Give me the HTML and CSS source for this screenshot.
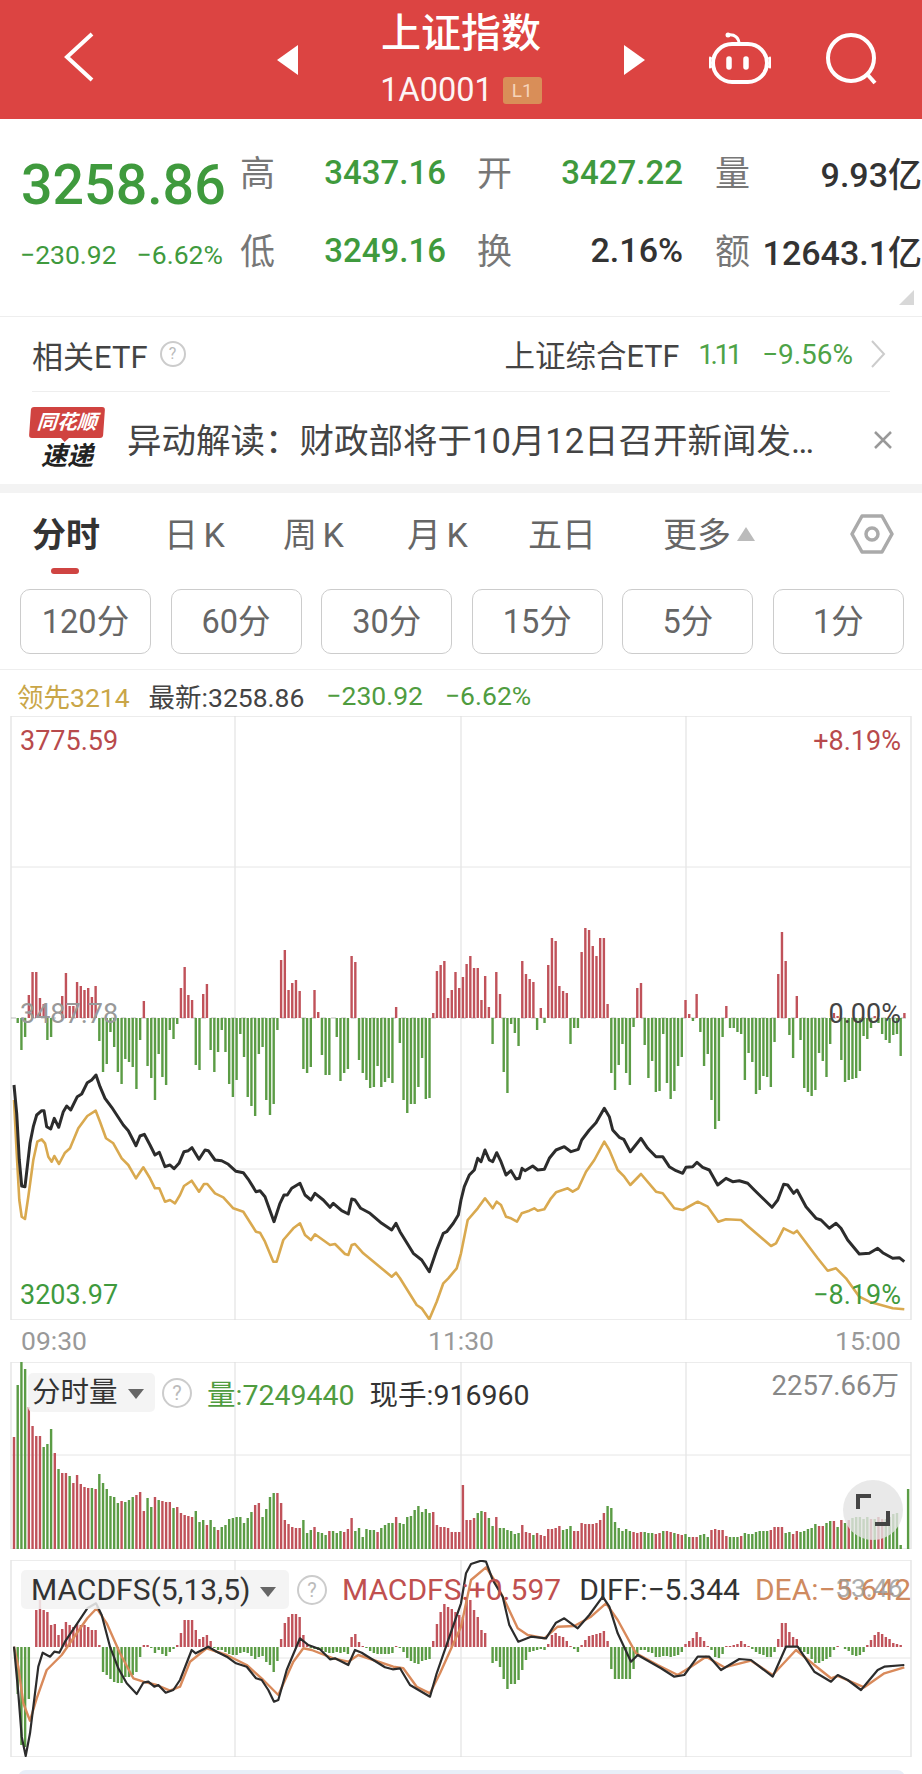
FILE: index.html
```html
<!DOCTYPE html>
<html lang="zh-CN">
<head>
    <meta charset="UTF-8">
    <title>上证指数</title>
    <link rel="stylesheet" href="styles.css">
</head>
<body>
    <header class="topbar">
        <svg class="back" width="32" height="50" viewBox="0 0 32 50"><path d="M29 2 L4 25 L29 48" /></svg>
        <div class="switcher">
            <span class="arrow arrow-left"></span>
            <div class="title">
                <h1>上证指数</h1>
                <div class="code">1A0001 <span class="badge">L1</span></div>
            </div>
            <span class="arrow arrow-right"></span>
        </div>
        <svg class="robot" width="62" height="52" viewBox="0 0 62 52">
            <circle class="dot" cx="19" cy="3" r="2.5" />
            <path class="thin" d="M19 3 C26 2 30 6 30 12" />
            <rect x="4" y="12" width="54" height="38" rx="19" />
            <path class="thin" d="M2 25 C0 28 0 33 2 36 M60 25 C62 28 62 33 60 36" />
            <path class="eye" d="M20 27 V35 M37 27 V35" />
        </svg>
        <svg class="search" width="54" height="52" viewBox="0 0 54 52"><circle cx="26" cy="25" r="23" /><path d="M42 41 L50 50" /></svg>
    </header>

    <section class="quote">
        <div class="quote-main">
            <div class="price">3258.86</div>
            <div class="change"><span>−230.92</span><span>−6.62%</span></div>
        </div>
        <div class="quote-grid">
            <span class="lbl">高</span><span class="val green">3437.16</span>
            <span class="lbl">开</span><span class="val green">3427.22</span>
            <span class="lbl">量</span><span class="val plain">9.93亿</span>
            <span class="lbl">低</span><span class="val green">3249.16</span>
            <span class="lbl">换</span><span class="val plain">2.16%</span>
            <span class="lbl">额</span><span class="val plain">12643.1亿</span>
        </div>
        <span class="corner"></span>
    </section>

    <section class="etf">
        <span class="etf-name">相关ETF</span>
        <span class="help help-small">?</span>
        <span class="etf-link">上证综合ETF</span>
        <span class="etf-num etf-last">1.11</span>
        <span class="etf-num etf-pct">−9.56%</span>
        <svg class="chev" width="16" height="30" viewBox="0 0 16 30"><path d="M2 2 L14 15 L2 28" /></svg>
    </section>

    <section class="news">
        <div class="logo">
            <div class="logo-flag">同花顺</div>
            <div class="logo-sub">速递</div>
        </div>
        <div class="news-text">异动解读：财政部将于10月12日召开新闻发…</div>
        <svg class="close" width="20" height="20" viewBox="0 0 20 20"><path d="M2 2 L18 18 M18 2 L2 18" /></svg>
    </section>

    <nav class="tabs">
        <span class="tab active">分时</span>
        <span class="tab">日 K</span>
        <span class="tab">周 K</span>
        <span class="tab">月 K</span>
        <span class="tab">五日</span>
        <span class="tab">更多<i class="tab-more"></i></span>
        <svg class="hex" width="44" height="40" viewBox="0 0 44 40"><path d="M2 20 L12 2 H32 L42 20 L32 38 H12 Z" /><circle cx="22" cy="20" r="6" /></svg>
    </nav>

    <div class="periods">
        <span class="period">120分</span>
        <span class="period">60分</span>
        <span class="period">30分</span>
        <span class="period">15分</span>
        <span class="period">5分</span>
        <span class="period">1分</span>
    </div>

    <div class="info">
        <span class="gold">领先3214</span>
        <span class="latest">最新:3258.86</span>
        <span class="info-green">−230.92</span>
        <span class="info-green">−6.62%</span>
    </div>

    <div class="chart chart-price">
        <svg id="priceChart" width="922" height="604" viewBox="0 716 922 604"></svg>
        <span class="tag tag-l tag-top red">3775.59</span>
        <span class="tag tag-r tag-top red">+8.19%</span>
        <span class="tag tag-l tag-mid grey">3487.78</span>
        <span class="tag tag-r tag-mid dark">0.00%</span>
        <span class="tag tag-l tag-bot green">3203.97</span>
        <span class="tag tag-r tag-bot green">−8.19%</span>
    </div>

    <div class="times"><span>09:30</span><span>11:30</span><span>15:00</span></div>

    <div class="chart chart-vol">
        <svg id="volChart" width="922" height="187" viewBox="0 1362 922 187"></svg>
        <div class="legend">
            <span class="pill pill-vol">分时量<i class="caret"></i></span>
            <span class="help">?</span>
            <span class="legend-green">量:7249440</span>
            <span class="legend-dark">现手:916960</span>
        </div>
        <span class="vol-max">2257.66万</span>
        <span class="expand">
            <svg width="34" height="34" viewBox="0 0 34 34"><path d="M2 16 V3 H15 M32 18 V31 H19" /></svg>
        </span>
    </div>

    <div class="chart chart-macd">
        <svg id="macdChart" width="922" height="197" viewBox="0 1560 922 197"></svg>
        <div class="legend legend-macd">
            <span class="pill pill-macd">MACDFS(5,13,5)<i class="caret"></i></span>
            <span class="help">?</span>
            <span class="macd-red">MACDFS:+0.597</span>
            <span class="legend-dark">DIFF:−5.344</span>
            <span class="macd-orange">DEA:−5.642</span>
        </div>
        <span class="macd-max">33.46</span>
    </div>

    <div class="strip"></div>

    <script src="script.js"></script>
</body>
</html>
```

FILE: styles.css
```css
* {
    box-sizing: border-box;
}
html, body {
    margin: 0;
    height: 1774px;
    overflow: hidden;
}
body {
    width: 922px;
    background: #fff;
    color: #333;
    font-family: Roboto, "Noto Sans CJK SC", sans-serif;
}
.green { color: #3f9a3d; }
.red { color: #b84a4c; }
.grey { color: #999; }
.dark { color: #444; }

/* top bar */
.topbar {
    height: 119px;
    background: #dc4442;
    position: relative;
    display: flex;
    align-items: flex-start;
    color: #fff;
}
.topbar svg { fill: none; stroke: #fff; }
.back {
    margin: 32px 0 0 63px;
    stroke-width: 4;
}
.switcher {
    position: absolute;
    left: 277px;
    top: 0;
    width: 368px;
    display: flex;
    justify-content: space-between;
    align-items: flex-start;
}
.arrow {
    margin-top: 45px;
    border-top: 15px solid transparent;
    border-bottom: 15px solid transparent;
}
.arrow-left { border-right: 21px solid #fff; }
.arrow-right { border-left: 21px solid #fff; }
.title {
    text-align: center;
    padding-top: 10px;
}
.title h1 {
    margin: 0;
    font-size: 40px;
    line-height: 48px;
    font-weight: 500;
}
.code {
    font-size: 32.5px;
    line-height: 40px;
    margin-top: 12px;
    display: flex;
    align-items: center;
    gap: 10px;
    opacity: .95;
}
.badge {
    width: 39px;
    height: 27px;
    border-radius: 3px;
    background: #d9925a;
    color: #f8dcc0;
    font-size: 19px;
    line-height: 27px;
    text-align: center;
}
.robot {
    position: absolute;
    left: 709px;
    top: 32px;
    stroke-width: 4;
}
.topbar .robot .dot { fill: #fff; stroke: none; }
.robot .thin { stroke-width: 3; }
.robot .eye { stroke-width: 5.5; stroke-linecap: round; }
.search {
    position: absolute;
    left: 825px;
    top: 33px;
    stroke-width: 4;
}

/* quote block */
.quote {
    height: 198px;
    display: flex;
    position: relative;
    border-bottom: 1px solid #eee;
}
.quote-main {
    width: 240px;
    padding: 32px 0 0 21px;
}
.price {
    font-size: 55.5px;
    line-height: 70px;
    font-weight: 500;
    color: #3f9a3d;
}
.change {
    margin-top: 19px;
    font-size: 26.5px;
    line-height: 30px;
    color: #3f9a3d;
    display: flex;
    gap: 20px;
    margin-left: -1px;
    white-space: nowrap;
}
.quote-grid {
    padding-top: 14px;
    display: grid;
    grid-template-columns: 35px 171px 66px 171px 67px 172px;
    grid-auto-rows: 78px;
    align-items: center;
}
.lbl {
    font-size: 35px;
    color: #777;
    text-align: right;
    margin-top: -4px;
}
.val {
    font-size: 33px;
    font-weight: 500;
    text-align: right;
    white-space: nowrap;
}
.val.plain { font-size: 34px; }
.corner {
    position: absolute;
    right: 8px;
    bottom: 11px;
    border-left: 15px solid transparent;
    border-bottom: 15px solid #d8d8d8;
}

/* etf + news rows */
.etf {
    margin: 0 32px;
    height: 75px;
    display: flex;
    align-items: center;
    border-bottom: 1px solid #eee;
    font-size: 30.5px;
    color: #444;
}
.etf-name { font-size: 31px; }
.help {
    display: inline-block;
    width: 30px;
    height: 30px;
    border: 2px solid #ccc;
    border-radius: 50%;
    color: #bbb;
    font-size: 20px;
    line-height: 26px;
    text-align: center;
}
.help-small {
    width: 26px;
    height: 26px;
    font-size: 16px;
    line-height: 22px;
    margin-left: 12px;
}
.etf-link { margin-left: auto; }
.etf-num {
    color: #4ea347;
    font-size: 28px;
}
.etf-last {
    margin-left: 19px;
    letter-spacing: -3.5px;
}
.etf-pct { margin-left: 23px; }
.chev {
    fill: none;
    stroke: #ccc;
    stroke-width: 2;
    margin-left: 17px;
    margin-right: 4px;
}
.news {
    height: 101px;
    display: flex;
    align-items: center;
    padding-left: 30px;
    border-bottom: 9px solid #f3f3f3;
}
.logo {
    width: 74px;
    text-align: center;
    font-style: italic;
    font-weight: 700;
}
.logo-flag {
    position: relative;
    background: #d04340;
    color: #fff;
    font-size: 20px;
    line-height: 31px;
    border-radius: 3px;
    white-space: nowrap;
    transform: skewX(-4deg);
}
.logo-flag::after {
    content: "";
    position: absolute;
    left: 32px;
    bottom: -4px;
    border-left: 4px solid transparent;
    border-right: 4px solid transparent;
    border-top: 4px solid #d04340;
}
.logo-sub {
    margin-top: 4px;
    font-size: 26px;
    line-height: 28px;
    color: #222;
}
.news-text {
    margin-left: 23px;
    font-size: 34.5px;
    color: #444;
    white-space: nowrap;
}
.close {
    position: absolute;
    left: 873px;
    top: 430px;
    fill: none;
    stroke: #999;
    stroke-width: 2.5;
}

/* tabs */
.tabs {
    height: 96px;
    padding: 22px 0 0 32px;
    display: flex;
    position: relative;
}
.tab {
    font-size: 34px;
    line-height: 40px;
    color: #666;
    white-space: nowrap;
    width: 122px;
    word-spacing: -3px;
}
.tab.active {
    font-weight: 700;
    color: #333;
    width: 132px;
}
.tab:nth-child(2) { width: 119px; }
.tab:nth-child(3) { width: 124px; }
.tab:nth-child(4) { width: 121px; }
.tab:nth-child(5) { width: 135px; }
.tab.active::after {
    content: "";
    position: absolute;
    left: 51px;
    top: 75px;
    width: 28px;
    height: 6px;
    border-radius: 3px;
    background: #cf4442;
}
.tab-more {
    display: inline-block;
    margin-left: 6px;
    vertical-align: 6px;
    border-left: 9px solid transparent;
    border-right: 9px solid transparent;
    border-bottom: 14px solid #bbb;
}
.hex {
    position: absolute;
    left: 850px;
    top: 21px;
    fill: none;
    stroke: #aaa;
    stroke-width: 3.5;
    stroke-linejoin: round;
}
.periods {
    padding: 0 18px 0 20px;
    display: flex;
    justify-content: space-between;
    height: 81px;
    border-bottom: 1px solid #eee;
}
.period {
    width: 131px;
    height: 65px;
    border: 1px solid #ccc;
    border-radius: 10px;
    font-size: 32.5px;
    line-height: 65px;
    text-align: center;
    color: #666;
}
.info {
    height: 46px;
    padding: 4px 0 0 17px;
    display: flex;
    align-items: center;
    font-size: 26.5px;
    gap: 22px;
}
.gold { color: #c9a648; margin-right: -3px; }
.latest { color: #444; }
.info-green { color: #4f9c3f; }

/* charts */
.chart {
    position: relative;
}
.chart svg {
    display: block;
}
.chart-price { height: 604px; }
.tag {
    position: absolute;
    font-size: 27px;
    line-height: 30px;
}
.tag-l { left: 20px; }
.tag-r { right: 21px; }
.tag-top { top: 10px; }
.tag-mid { top: 283px; }
.tag-bot { top: 564px; }
.times {
    height: 42px;
    padding: 6px 21px 0;
    display: flex;
    justify-content: space-between;
    font-size: 26.5px;
    line-height: 30px;
    color: #999;
}
.chart-vol { height: 187px; }
.legend {
    position: absolute;
    left: 28px;
    top: 10px;
    display: flex;
    align-items: center;
    gap: 15px;
    font-size: 28.5px;
    white-space: nowrap;
}
.pill {
    height: 39px;
    padding-left: 4px;
    border-radius: 5px;
    background: rgba(242, 242, 242, .85);
    line-height: 39px;
    color: #333;
}
.pill-vol {
    width: 127px;
    margin-right: -8px;
}
.caret {
    display: inline-block;
    margin-left: 10px;
    vertical-align: 3px;
    border-left: 8px solid transparent;
    border-right: 8px solid transparent;
    border-top: 10px solid #666;
}
.legend-green { color: #4f9c3f; }
.legend-dark { color: #333; }
.vol-max {
    position: absolute;
    right: 23px;
    top: 8px;
    font-size: 27.5px;
    line-height: 32px;
    color: #888;
}
.expand {
    position: absolute;
    left: 843px;
    top: 118px;
    width: 60px;
    height: 60px;
    border-radius: 50%;
    background: rgba(228, 228, 228, .8);
    display: flex;
    align-items: center;
    justify-content: center;
}
.expand svg {
    fill: none;
    stroke: #444;
    stroke-width: 4;
}
.chart-macd {
    margin-top: 11px;
    height: 197px;
}
.legend-macd {
    left: 21px;
    top: 10px;
    gap: 8px;
    font-size: 30px;
}
.pill-macd {
    width: 268px;
    padding-left: 10px;
}
.legend-macd .help { margin: 0 7px 0 0; }
.legend-macd .legend-dark { margin: 0 7px 0 10px; }
.macd-red { color: #c0504f; }
.macd-orange { color: #cf8a60; }
.macd-max {
    position: absolute;
    left: 836px;
    top: 12px;
    font-size: 26.5px;
    line-height: 32px;
    color: #999;
    opacity: .8;
}
.strip {
    margin: 13px 17px 0 18px;
    height: 40px;
    background: #e8eef8;
    border-radius: 8px;
}
```

FILE: script.js
```js
// traced chart data. bars: positive = red, negative = green
const priceBars = [0,-5,-32,-19,23,46,46,20,14,-22,-19,0,0,22,45,12,12,36,32,28,30,21,32,-23,-54,-46,-14,-29,-54,-66,-41,-44,-49,-71,-22,17,-48,-60,-82,-36,-59,-67,-12,-21,-6,30,51,23,18,-47,-52,24,34,-32,-54,-34,-12,-34,-66,-79,-62,-16,-39,-79,-88,-98,-36,-29,-82,-97,-86,-12,58,68,28,35,38,27,-51,-55,-49,28,6,-37,-57,-57,0,-19,-63,-55,-51,62,56,-42,-55,-62,-70,-69,-48,-69,-64,-60,-65,11,-25,-82,-95,-86,-86,-69,-40,-81,-80,5,47,53,57,20,28,46,30,
    41,54,62,50,50,18,42,11,-26,46,24,-54,-75,-6,-15,-28,57,44,39,36,-12,10,-5,53,80,77,32,27,25,-26,-10,-10,66,90,88,72,62,80,80,14,-55,-72,-47,-26,-55,-67,-9,30,35,-27,-60,-43,-74,-73,-16,-65,-81,-73,-48,-39,18,4,-3,24,-14,-48,-36,-82,-111,-103,-19,12,-10,-10,-14,-16,-62,-35,-44,-76,-72,-58,-59,-69,-24,44,86,57,-17,-40,22,-22,-70,-74,-78,-72,-35,-43,-59,-26,5,2,-42,-64,-62,-61,-60,-53,-18,-21,-10,2,-5,-16,-22,-25,-17,-16,-38,5];

const volBars = [112,-164,-187,-180,142,123,113,113,-102,-105,-120,96,-80,76,76,-73,66,74,65,62,61,-61,60,-75,-66,-60,-53,-52,-46,48,-47,-49,-52,54,57,38,-51,-42,52,-49,48,47,47,-41,42,36,34,33,32,-38,-27,-29,24,-29,-22,19,-22,-24,-30,-31,-32,-32,-26,-31,-37,44,46,-32,-40,-52,-56,56,46,29,25,22,21,21,-29,-16,-19,22,-17,-16,-14,18,-18,-16,-18,17,20,31,-18,-21,-12,-20,-19,-19,17,-21,-24,-26,-26,32,-26,-25,-32,-33,-39,-43,-37,-40,-36,37,24,22,22,21,17,17,17,
    64,29,29,31,-36,-38,37,-31,-23,32,-21,-21,-19,-18,-15,-16,24,17,16,-14,16,14,13,20,20,21,23,-19,-20,-23,18,18,26,25,25,25,26,29,36,-43,-41,-27,-21,-18,-20,-18,17,16,17,-17,-16,-16,15,16,-18,18,17,-16,15,14,-15,-12,12,12,-14,-15,-12,19,20,19,19,13,-12,-12,-12,13,-16,-15,-15,-17,-18,-18,-18,19,22,22,22,-16,-17,15,18,-17,-18,-20,-21,-25,23,23,-26,-28,28,-22,29,-26,29,-31,-32,-32,-30,-32,30,-30,32,30,-30,-32,-35,-36,-4,0,-60];

const macdBars = [0,-47,-98,-100,-52,0,37,47,37,35,22,23,12,18,25,22,20,23,22,22,20,17,17,2,-25,-28,-32,-35,-36,-36,-30,-30,-28,-25,-10,2,2,-1,-6,-3,-7,-9,-5,-2,2,14,27,27,27,17,8,10,12,6,-1,-3,-3,-5,-7,-8,-8,-6,-5,-6,-9,-12,-10,-9,-15,-18,-25,-14,8,24,30,33,33,30,12,3,-1,-2,-3,-3,-5,-6,-6,-5,-6,-5,-7,10,13,5,1,-1,-4,-6,-7,-7,-7,-7,-6,1,-1,-5,-11,-14,-16,-17,-14,-13,-12,6,23,35,43,40,38,35,32,
    30,47,47,37,30,17,14,0,-16,-14,-20,-32,-42,-37,-37,-33,-23,-13,-5,-4,-3,-2,-3,3,12,14,11,10,6,1,-2,-5,2,7,11,12,13,14,16,6,-22,-32,-32,-32,-32,-32,-22,-8,-3,-3,-5,-6,-10,-10,-9,-9,-10,-9,-8,-5,3,6,9,15,10,6,1,-3,-10,-11,-7,1,1,2,3,6,3,1,-2,-5,-7,-8,-10,-10,-5,8,24,24,15,10,8,-3,-5,-7,-12,-16,-16,-14,-12,-10,-3,1,0,-2,-4,-8,-9,-8,-5,2,7,12,15,13,10,8,4,3,2,0];

// line points are in 3x crop units: a left half (x from 0) and a right half (x from 461)
const priceBlack = [[42,555,50,640,58,780,65,858,75,860,82,800,90,730,100,680,110,645,125,632,132,632,140,680,152,687,163,655,176,682,190,635,200,618,212,630,232,590,245,582,262,548,275,540,288,525,300,560,315,595,335,622,370,675,385,692,408,737,420,708,433,703,450,735,465,765,478,757,495,800,510,795,522,806,537,790,552,755,565,752,576,743,597,778,615,750,625,752,645,780,665,782,685,793,708,814,730,818,745,838,768,875,780,872,795,890,822,965,840,910,852,885,862,885,875,865,900,850,915,885,933,900,945,880,970,900,990,922,1000,910,1025,932,1045,942,1055,897,1065,900,1082,925,1110,940,1145,970,1175,990,1188,970,1200,995,1240,1060,1265,1080,1288,1115,1310,1050,1330,1000,1340,995,1360,970,1375,945,1383,900],
    [0,900,10,860,25,825,40,810,50,775,60,785,72,750,85,780,95,785,107,758,120,785,135,825,150,812,165,837,175,835,183,805,192,812,215,798,230,810,250,808,265,775,285,750,310,740,330,755,352,748,362,720,385,690,405,668,430,625,445,650,455,690,475,712,488,718,508,755,540,715,560,745,585,770,605,770,625,800,645,812,665,820,675,802,695,800,708,787,725,802,745,810,770,855,795,835,815,845,835,842,860,850,880,870,933,922,950,900,968,853,980,855,998,880,1008,870,1035,920,1065,955,1080,960,1105,985,1125,970,1140,985,1160,1020,1195,1062,1225,1060,1250,1045,1265,1058,1295,1075,1315,1073,1330,1085]];

const priceGold = [[42,600,50,760,58,900,65,950,75,957,85,890,100,780,112,725,125,718,135,730,145,770,155,785,163,768,177,792,195,758,210,745,235,685,262,648,287,632,300,665,318,715,340,730,365,775,385,795,408,835,430,802,450,835,465,865,478,865,495,905,510,900,525,910,540,885,552,858,575,842,597,875,612,852,622,852,645,880,670,892,700,925,730,935,768,995,780,998,795,1025,820,1085,830,1085,850,1020,880,985,900,970,915,1005,933,1020,945,1003,990,1035,1005,1032,1035,1062,1045,1065,1055,1035,1065,1032,1090,1060,1175,1130,1188,1118,1200,1135,1250,1215,1265,1225,1288,1258,1310,1205,1330,1150,1345,1135,1370,1105,1383,1060],
    [0,1060,20,960,50,925,72,895,95,925,107,905,120,915,135,950,150,955,168,965,182,940,205,932,220,925,230,932,250,928,270,895,285,877,320,865,335,875,352,865,375,815,400,780,430,725,445,750,470,810,490,830,508,855,540,822,585,875,605,880,640,925,665,930,710,905,740,920,772,965,795,958,840,960,860,978,930,1038,945,1030,968,985,998,1000,1008,992,1070,1075,1100,1112,1125,1105,1155,1135,1195,1190,1225,1205,1295,1225,1330,1228]];

const macdBlack = [[42,920,55,1060,65,1190,77,1248,90,1180,105,1060,115,980,128,938,150,950,163,935,178,938,195,905,232,850,262,805,288,790,305,825,330,920,355,985,380,1030,410,1062,430,1028,445,1025,463,1040,475,1035,497,1058,520,1050,540,1020,575,930,587,940,625,920,650,935,680,950,708,970,740,980,768,1015,785,1020,805,1050,822,1085,835,1080,860,990,900,895,925,915,960,928,990,958,1005,955,1045,975,1065,930,1085,938,1120,960,1155,982,1178,988,1200,985,1230,1035,1290,1070,1310,1000,1383,790],
    [0,790,15,700,30,672,60,662,75,665,95,720,125,770,145,855,172,905,210,890,255,895,285,848,310,835,350,865,385,825,425,770,445,800,470,880,510,965,530,945,600,985,640,1010,670,1005,710,950,745,950,780,990,835,957,870,960,935,1010,975,920,1010,920,1060,995,1110,1025,1130,1005,1160,1020,1200,1050,1250,990,1270,980,1330,975]];

const macdOrange = [[42,920,55,980,70,1090,90,1142,110,1075,140,990,185,945,230,880,262,835,290,805,320,850,360,940,400,1015,430,1025,470,1035,510,1052,540,1040,570,965,620,925,680,945,740,975,790,1020,835,1065,880,965,910,925,935,930,1000,955,1045,965,1075,945,1120,960,1180,980,1210,985,1250,1040,1290,1060,1320,1000,1383,860],
    [0,860,30,720,75,682,100,720,135,790,170,865,200,885,250,895,290,860,340,858,390,830,435,790,470,840,525,940,590,975,650,1005,690,980,735,950,790,982,870,962,935,1005,1005,930,1060,975,1110,1015,1130,1008,1210,1042,1270,1000,1330,982]];

const GRID = '#e6e6e6';

function barX(i) {
    return 14 + 3.71 * i;
}

function linePath(halves, top) {
    let d = '';
    halves.forEach((pts, h) => {
        for (let i = 0; i < pts.length; i += 2) {
            const x = pts[i] / 3 + h * 461;
            const y = pts[i + 1] / 3 + top;
            d += (d ? 'L' : 'M') + x.toFixed(1) + ' ' + y.toFixed(1);
        }
    });
    return d;
}

function frame(top, bottom, rows) {
    let out = `<rect x="11" y="${top}" width="900" height="${bottom - top}" fill="none" stroke="${GRID}" stroke-width="1.5"/>`;
    [235, 461, 686].forEach(x => {
        out += `<path d="M${x} ${top}V${bottom}" stroke="#ddd" stroke-width="1"/>`;
    });
    rows.forEach(y => {
        out += `<path d="M11 ${y}H911" stroke="${GRID}" stroke-width="1"/>`;
    });
    return out;
}

// diverging bars around a zero line, or rising from the base when volume
function bars(data, zero, volume) {
    let red = '', green = '';
    data.forEach((v, i) => {
        if (!v) return;
        const x = barX(i).toFixed(2);
        const seg = volume ? `M${x} ${zero}v${-Math.abs(v)}` : `M${x} ${zero}v${-v}`;
        if (v > 0) red += seg; else green += seg;
    });
    return `<path d="${red}" stroke="#c0525a" stroke-width="2.4" fill="none"/>` +
           `<path d="${green}" stroke="#5b9c45" stroke-width="2.4" fill="none"/>`;
}

function line(halves, top, color, width) {
    return `<path d="${linePath(halves, top)}" stroke="${color}" stroke-width="${width}" fill="none" stroke-linejoin="round"/>`;
}

document.getElementById('priceChart').innerHTML =
    frame(716, 1320, [867, 1169]) +
    '<path d="M11 1018H911" stroke="#bbb" stroke-width="1" stroke-dasharray="5 5"/>' +
    bars(priceBars, 1018, false) +
    line(priceGold, 900, '#d9a94f', 2.6) +
    line(priceBlack, 900, '#2c2c2c', 3);

document.getElementById('volChart').innerHTML =
    frame(1362, 1549, [1455]) +
    bars(volBars, 1549, true);

document.getElementById('macdChart').innerHTML =
    frame(1560, 1757, [1658]) +
    bars(macdBars, 1647, false) +
    line(macdOrange, 1340, '#d98a5b', 2.4) +
    line(macdBlack, 1340, '#2c2c2c', 2.2);
```
